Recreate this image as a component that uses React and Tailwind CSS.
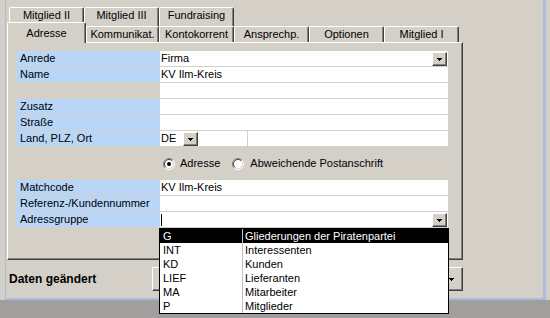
import React from "react";

const FONT = "font-['Liberation_Sans',Arial,sans-serif]";

function Arrow() {
  return (
    <svg width="5" height="3" viewBox="0 0 5 3" shapeRendering="crispEdges">
      <rect x="0" y="0" width="5" height="1" fill="#000" />
      <rect x="1" y="1" width="3" height="1" fill="#000" />
      <rect x="2" y="2" width="1" height="1" fill="#000" />
    </svg>
  );
}

function DropBtn() {
  return (
    <div className="w-[15px] h-[14px] shrink-0 bg-[#d4d0c8] border-t border-l border-t-white border-l-white border-r border-b border-r-[#404040] border-b-[#404040] shadow-[inset_-1px_-1px_#808080] flex items-center justify-center">
      <Arrow />
    </div>
  );
}

function Radio({ checked }) {
  return (
    <svg width="12" height="12" viewBox="0 0 12 12" className="shrink-0">
      <circle cx="6" cy="6" r="5" fill="#fff" />
      <path d="M2.1 9.9 A5.5 5.5 0 0 1 9.9 2.1" stroke="#808080" fill="none" />
      <path d="M9.9 2.1 A5.5 5.5 0 0 1 2.1 9.9" stroke="#ffffff" fill="none" />
      <path d="M2.8 9.2 A4.5 4.5 0 0 1 9.2 2.8" stroke="#404040" fill="none" />
      <path d="M9.2 2.8 A4.5 4.5 0 0 1 2.8 9.2" stroke="#d4d0c8" fill="none" />
      {checked && <circle cx="6" cy="6" r="2" fill="#000" />}
    </svg>
  );
}

function Row({ label, blue = true, children }) {
  return (
    <div className="flex h-[15px]">
      <div className={`w-[144px] pl-[4px] leading-[15px] ${blue ? "bg-[#b9d6f7]" : ""}`}>{label}</div>
      <div className="w-[288px] bg-white leading-[15px] flex items-end">{children}</div>
    </div>
  );
}

function Tab({ label, w }) {
  return (
    <div
      className={`h-[19px] bg-[#d4d0c8] border-t border-l border-t-white border-l-white border-r border-r-[#404040] shadow-[inset_-1px_0_#808080] rounded-tl-[2px] rounded-tr-[2px] text-center leading-[14px] ${w}`}
    >
      {label}
    </div>
  );
}

function Tab2({ label, w }) {
  return (
    <div
      className={`h-[16px] bg-[#d4d0c8] border-t border-l border-t-white border-l-white border-r border-r-[#404040] shadow-[inset_-1px_0_#808080] rounded-tl-[2px] rounded-tr-[2px] text-center leading-[14px] ${w}`}
    >
      {label}
    </div>
  );
}

const items = [
  ["G", "Gliederungen der Piratenpartei"],
  ["INT", "Interessenten"],
  ["KD", "Kunden"],
  ["LIEF", "Lieferanten"],
  ["MA", "Mitarbeiter"],
  ["P", "Mitglieder"],
];

export default function App() {
  return (
    <div className={`relative w-[550px] h-[318px] overflow-hidden bg-[#d4d0c8] text-[11px] text-black ${FONT}`}>
      <div className="flex h-[300px]">
        <div className="ml-[5px] w-[541px] h-[300px] border-l border-r-[3px] border-b-2 border-[#a9bedf] bg-[#d4d0c8] flex flex-col">
          {/* tab area */}
          <div className="pl-[1px] pt-[7px]">
            <div className="flex h-[15px] pl-[2px]">
              <Tab label="Mitglied II" w="w-[75px]" />
              <Tab label="Mitglied III" w="w-[75px]" />
              <Tab label="Fundraising" w="w-[75px]" />
            </div>
            <div className="flex items-end h-[20px] relative">
              <div className="relative z-10 -mb-px h-[21px] w-[79px] bg-[#d4d0c8] border-t border-l border-t-white border-l-white border-r border-r-[#404040] shadow-[inset_-1px_0_#808080] rounded-tl-[2px] rounded-tr-[2px] text-center leading-[14px] pt-[3px]">
                Adresse
              </div>
              <Tab2 label="Kommunikat." w="w-[73px]" />
              <Tab2 label="Kontokorrent" w="w-[75px]" />
              <Tab2 label="Ansprechp." w="w-[75px]" />
              <Tab2 label="Optionen" w="w-[75px]" />
              <Tab2 label="Mitglied I" w="w-[75px]" />
            </div>
            {/* page */}
            <div className="w-[456px] h-[218px] border-t border-l border-t-white border-l-white border-r border-b border-r-[#404040] border-b-[#404040] shadow-[inset_-1px_-1px_#808080] pl-[8px] pt-[8px] flex flex-col gap-[1px]">
              <Row label="Anrede">
                <div className="flex-1 pl-[1px]">Firma</div>
                <DropBtn />
                <div className="w-[1px]" />
              </Row>
              <Row label="Name">
                <div className="flex-1 pl-[1px]">KV Ilm-Kreis</div>
              </Row>
              <Row label="" blue={false} />
              <Row label="Zusatz" />
              <Row label="Straße" />
              <Row label="Land, PLZ, Ort">
                <div className="w-[23px] pl-[1px]">DE</div>
                <DropBtn />
                <div className="w-[49px]" />
                <div className="w-[1px] h-[15px] bg-[#d4d0c8]" />
                <div className="w-[200px]" />
              </Row>
              <div className="h-[32px] flex items-center pl-[147px] pt-[1px]">
                <Radio checked />
                <span className="ml-[5px]">Adresse</span>
                <span className="ml-[12px]">
                  <Radio />
                </span>
                <span className="ml-[6px]">Abweichende Postanschrift</span>
              </div>
              <Row label="Matchcode">
                <div className="flex-1 pl-[1px]">KV Ilm-Kreis</div>
              </Row>
              <Row label="Referenz-/Kundennummer" />
              <Row label="Adressgruppe">
                <div className="flex-1 pl-[1px] h-[15px] flex items-center">
                  <div className="w-[1px] h-[12px] bg-black" />
                </div>
                <DropBtn />
                <div className="w-[1px]" />
              </Row>
            </div>
          </div>
          {/* status */}
          <div className="flex items-center pl-[3px] mt-[7px] h-[24px]">
            <div className="w-[143px] text-[12px] font-bold">Daten geändert</div>
            <div className="w-[311px] h-[24px] bg-[#d4d0c8] border-t border-l border-t-white border-l-white border-r border-b border-r-[#404040] border-b-[#404040] shadow-[inset_-1px_-1px_#808080] flex items-center justify-end pr-[8px]">
              <Arrow />
            </div>
          </div>
        </div>
      </div>
      <div className="h-[18px] bg-[#a19e9d]" />

      {/* dropdown list */}
      <div className="absolute left-[159px] top-[228px] w-[290px] h-[86px] border border-black bg-white">
        {items.map(([a, b], i) => (
          <div
            key={a}
            className={`flex h-[14px] leading-[14px] ${i === 0 ? "bg-black text-white" : ""}`}
          >
            <div className="w-[82px] pl-[3px]">{a}</div>
            <div className="w-[1px] bg-[#c0c0c0]" />
            <div className="flex-1 pl-[2px]">{b}</div>
          </div>
        ))}
      </div>
    </div>
  );
}
